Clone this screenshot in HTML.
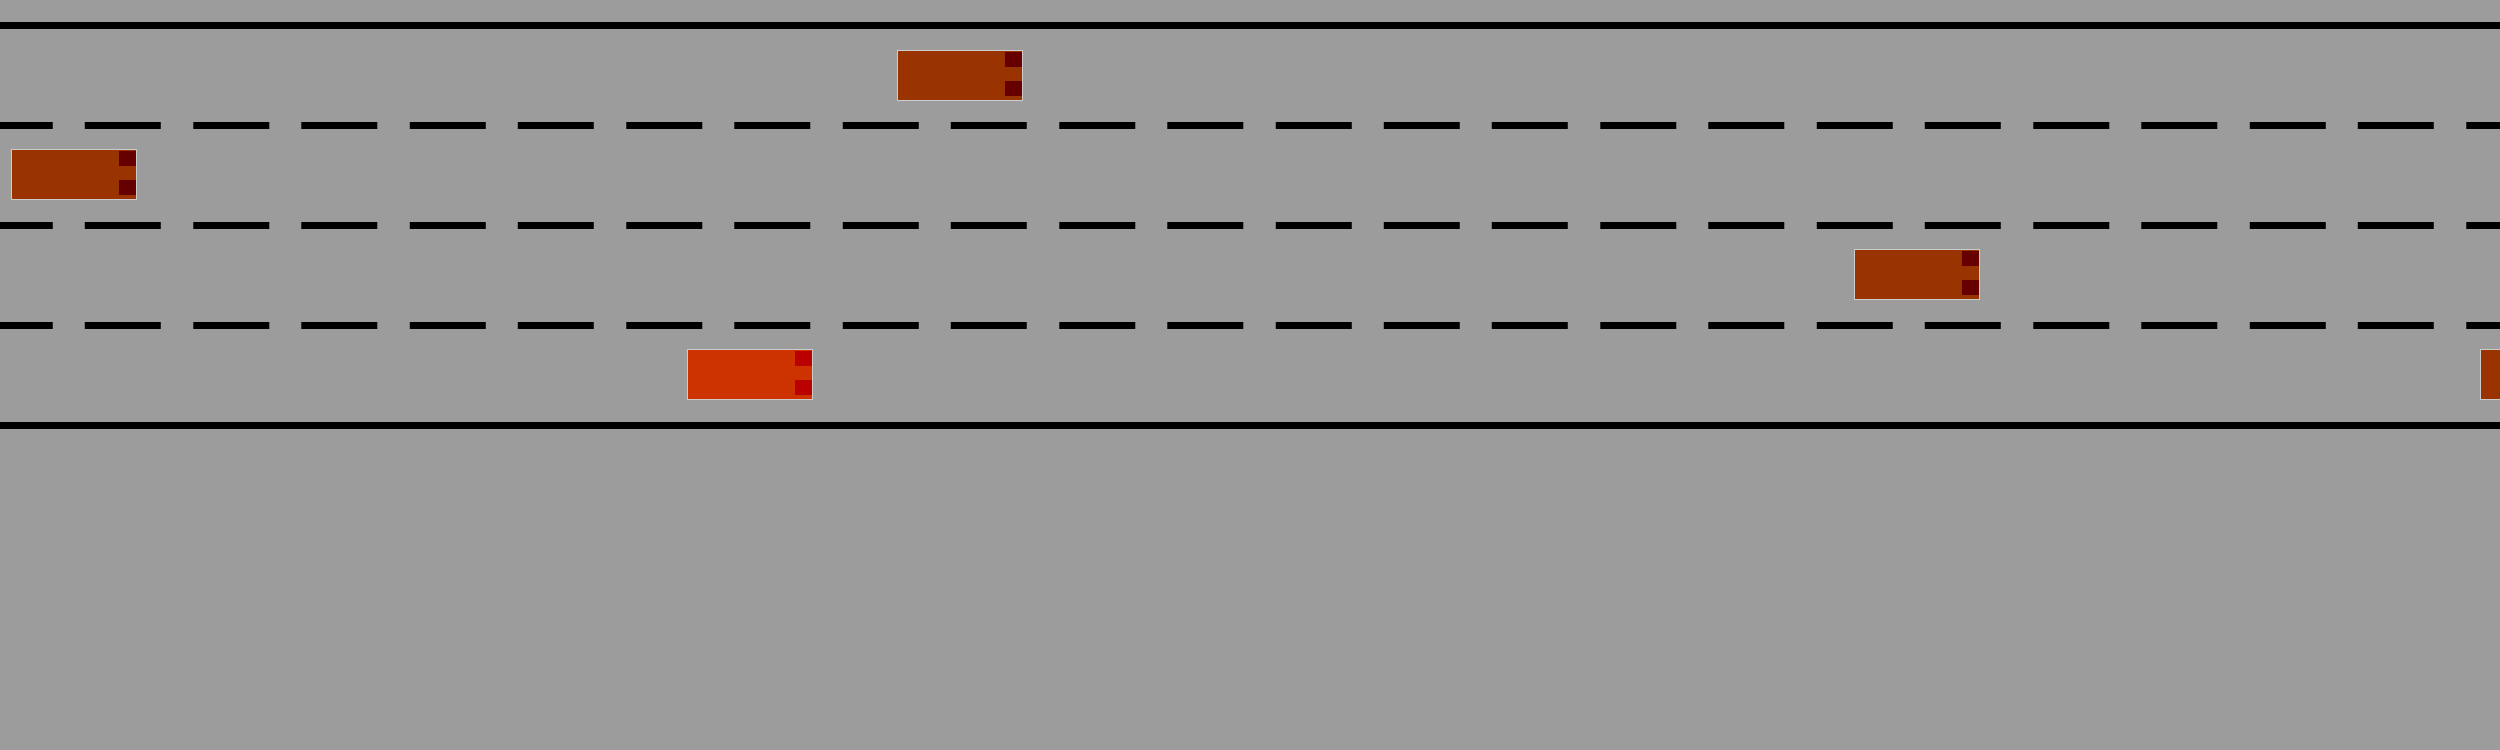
<!DOCTYPE html>
<html><head><style>
body{margin:0;width:2500px;height:750px;background:#9c9c9c;position:relative;overflow:hidden}
.l{position:absolute;left:0;width:2500px;height:7px}
.s{background:#000}
.d{background:repeating-linear-gradient(90deg,#000 0 76px,transparent 76px 108.23px);background-position:-23.23px 0;left:0}
.c{position:absolute;width:124px;height:49px;border:1px solid #ccc;background:#993300}
.c i{position:absolute;right:0;width:17px;height:15px;background:#660000}
.c i.a{top:1px}.c i.b{top:30px}
.r{background:#cc3300}.r i{background:#bb0000}
</style></head><body>
<div class="l s" style="top:22px"></div>
<div class="l d" style="top:122px"></div>
<div class="l d" style="top:222px"></div>
<div class="l d" style="top:322px"></div>
<div class="l s" style="top:422px"></div>
<div class="c" style="left:897px;top:50px"><i class="a"></i><i class="b"></i></div>
<div class="c" style="left:11px;top:149px"><i class="a"></i><i class="b"></i></div>
<div class="c" style="left:1854px;top:249px"><i class="a"></i><i class="b"></i></div>
<div class="c r" style="left:687px;top:349px"><i class="a"></i><i class="b"></i></div>
<div class="c" style="left:2480px;top:349px"><i class="a"></i><i class="b"></i></div>
</body></html>
